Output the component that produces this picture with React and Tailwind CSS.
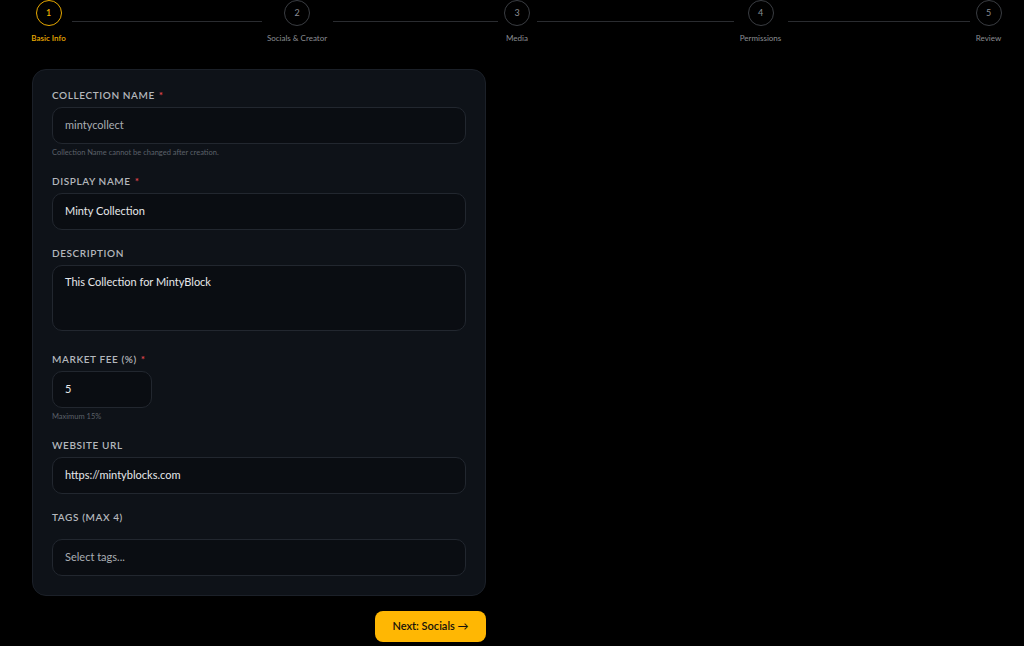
import React from "react";

const steps = [
  { n: 1, label: "Basic Info", active: true, w: "w-[33px]" },
  { n: 2, label: "Socials & Creator", w: "w-[58px]" },
  { n: 3, label: "Media", w: "w-[26px]" },
  { n: 4, label: "Permissions", w: "w-[41px]" },
  { n: 5, label: "Review", w: "w-[25px]" },
];

const connectors = ["w-[190px]", "w-[165px]", "w-[197px]", "w-[182px]"];

function Stepper() {
  return (
    <div className="flex items-center">
      {steps.map((s, i) => (
        <React.Fragment key={s.n}>
          <div className={"flex shrink-0 flex-col items-center " + s.w}>
            <div
              className={
                s.active
                  ? "flex h-[26px] w-[26px] shrink-0 items-center justify-center rounded-full border-[1.5px] border-[#e8a900] text-[9px] font-semibold text-[#f0b400]"
                  : "flex h-[26px] w-[26px] shrink-0 items-center justify-center rounded-full border border-[#3a3d42] text-[9px] text-[#8b8e93]"
              }
            >
              {s.n}
            </div>
            <div
              className={
                s.active
                  ? "mt-[7px] whitespace-nowrap text-[8px] leading-[10px] font-semibold text-[#e8a900]"
                  : "mt-[7px] whitespace-nowrap text-[8px] leading-[10px] text-[#8b8e93]"
              }
            >
              {s.label}
            </div>
          </div>
          {i < steps.length - 1 && (
            <div className={"mx-[6.5px] h-px shrink-0 bg-[#2a2c30] " + connectors[i]} />
          )}
        </React.Fragment>
      ))}
    </div>
  );
}

function Label({ children, required, className = "" }) {
  return (
    <div className={"text-[10px] leading-[14px] font-semibold uppercase tracking-[0.06em] text-[#b4b7bc] " + className}>
      {children}
      {required && <span className="ml-1 text-[#e5484d]">*</span>}
    </div>
  );
}

function Box({ children, className = "", muted }) {
  return (
    <div
      className={
        "flex h-[37px] items-center rounded-[10px] border border-[#22272f] bg-[#0a0d12] px-3 text-[11px] " +
        (muted ? "text-[#a9adb3] " : "text-[#e6e8eb] ") +
        className
      }
    >
      {children}
    </div>
  );
}

function Hint({ children }) {
  return <div className="mt-1 text-[7.5px] leading-[10px] text-[#5c6169]">{children}</div>;
}

export default function App() {
  return (
    <div
      className="min-h-[646px] w-full bg-black pl-8 pr-[22px]"
      style={{ fontFamily: "Lato, 'Open Sans', sans-serif" }}
    >
      <Stepper />

      <div className="mt-[26px] w-[454px]">
        <div className="flex flex-col gap-4 rounded-[14px] border border-[#1b2028] bg-[#0e1218] px-[19px] pt-[18px] pb-[19px]">
          <div>
            <Label required className="mb-[5px]">Collection Name</Label>
            <Box muted>mintycollect</Box>
            <Hint>Collection Name cannot be changed after creation.</Hint>
          </div>

          <div>
            <Label required className="mb-[5px]">Display Name</Label>
            <Box>Minty Collection</Box>
          </div>

          <div className="mb-[5px]">
            <Label className="mb-[5px]">Description</Label>
            <div className="h-[66px] rounded-[10px] border border-[#22272f] bg-[#0a0d12] px-3 pt-2 text-[11px] text-[#e6e8eb]">
              This Collection for MintyBlock
            </div>
          </div>

          <div>
            <Label required className="mb-[5px]">Market Fee (%)</Label>
            <Box className="w-[100px]">5</Box>
            <Hint>Maximum 15%</Hint>
          </div>

          <div>
            <Label className="mb-[5px]">Website URL</Label>
            <Box>https://mintyblocks.com</Box>
          </div>

          <div>
            <Label className="mb-[15px]">Tags (Max 4)</Label>
            <Box muted className="h-[36px]">Select tags...</Box>
          </div>
        </div>

        <div className="mt-[15px] flex justify-end">
          <button className="flex h-[31px] w-[111px] items-center justify-center rounded-[8px] bg-[#ffb703] text-[11px] font-semibold text-[#15120a]">
            Next: Socials →
          </button>
        </div>
      </div>
    </div>
  );
}
